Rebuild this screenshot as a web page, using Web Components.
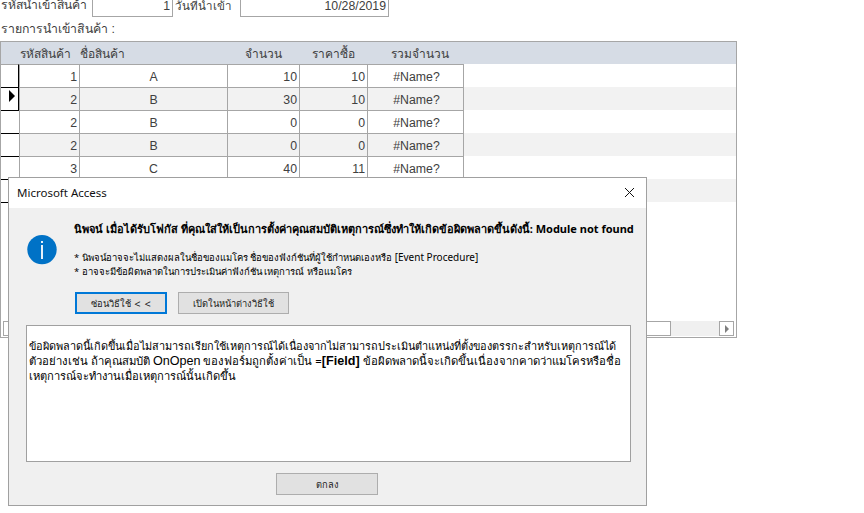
<!DOCTYPE html>
<html lang="th">
<head>
<meta charset="utf-8">
<title>Microsoft Access</title>
<style>
  html, body { margin: 0; height: 100%; background: #fff; overflow: hidden; }
  body { position: relative; font-family: "Liberation Sans", "Noto Sans", sans-serif; font-size: 12.3px; color: #404040; }
</style>
</head>
<body>
<order-form></order-form>
<access-dialog title="Microsoft Access">
  <b slot="headline">นิพจน์ เมื่อได้รับโฟกัส ที่คุณใส่ให้เป็นการตั้งค่าคุณสมบัติเหตุการณ์ซึ่งทำให้เกิดข้อผิดพลาดขึ้นดังนี้: Module not found</b>
  <div slot="notes">* นิพจน์อาจจะไม่แสดงผลในชื่อของแมโคร ชื่อของฟังก์ชันที่ผู้ใช้กำหนดเองหรือ <span style="font-size:10px">[Event Procedure]</span></div>
  <div slot="notes">* อาจจะมีข้อผิดพลาดในการประเมินค่าฟังก์ชัน เหตุการณ์ หรือแมโคร</div>
  <div slot="help" style="font-size:10.9px">ข้อผิดพลาดนี้เกิดขึ้นเมื่อไม่สามารถเรียกใช้เหตุการณ์ได้เนื่องจากไม่สามารถประเมินตำแหน่งที่ตั้งของตรรกะสำหรับเหตุการณ์ได้</div>
  <div slot="help" style="font-size:11.3px">ตัวอย่างเช่น ถ้าคุณสมบัติ <span style="font:12.6px 'Liberation Sans',sans-serif">OnOpen</span> ของฟอร์มถูกตั้งค่าเป็น =<b style="font:bold 12.6px 'Liberation Sans',sans-serif">[Field]</b> ข้อผิดพลาดนี้จะเกิดขึ้นเนื่องจากคาดว่าแมโครหรือชื่อ</div>
  <div slot="help" style="font-size:11.15px">เหตุการณ์จะทำงานเมื่อเหตุการณ์นั้นเกิดขึ้น</div>
</access-dialog>

<script>
  const ROWS = [
    ['1', 'A', '10', '10'],
    ['2', 'B', '30', '10'],
    ['2', 'B', '0', '0'],
    ['2', 'B', '0', '0'],
    ['3', 'C', '40', '11'],
    ['', '', '', ''],
    ['', '', '', '']
  ];

  // Form header: two inputs cut off by the top of the window
  class OrderForm extends HTMLElement {
    constructor() {
      super();
      this.attachShadow({ mode: 'open' });
      this.shadowRoot.innerHTML = `
        <style>
          :host { display: flex; flex-direction: column; height: 100%; }
          .fields { display: flex; height: 17px; line-height: 11px; }
          .lbl { padding-left: 1px; white-space: nowrap; box-sizing: border-box; }
          .lbl.a { width: 92px; font-size: 12.2px; }
          .lbl.b { width: 67px; padding-left: 2px; font-size: 11.6px; }
          .input { box-sizing: border-box; height: 17px; border: 1px solid #a6a6a6; border-top: 0;
                   text-align: right; padding-right: 2px; line-height: 13px; }
          .input.a { width: 81px; }
          .input.b { width: 149px; }
          .caption { height: 24px; line-height: 25px; padding-left: 1px; white-space: nowrap; font-size: 12.3px; }
        </style>
        <div class="fields">
          <span class="lbl a">รหัสนำเข้าสินค้า</span>
          <span class="input a">1</span>
          <span class="lbl b">วันที่นำเข้า</span>
          <span class="input b">10/28/2019</span>
        </div>
        <div class="caption">รายการนำเข้าสินค้า :</div>
        <order-grid></order-grid>`;
    }
  }

  // Datasheet subform with row selectors and the horizontal scrollbar
  class OrderGrid extends HTMLElement {
    constructor() {
      super();
      this.attachShadow({ mode: 'open' });
      const rows = ROWS.map((r, i) => `
        <div class="row ${i % 2 ? 'alt' : ''}">
          <div class="sel ${i === 1 ? 'cur' : ''}"></div>
          <div class="c n w1">${r[0]}</div>
          <div class="c m w2">${r[1]}</div>
          <div class="c n w3">${r[2]}</div>
          <div class="c n w4">${r[3]}</div>
          <div class="c m w5">${r[0] ? '#Name?' : ''}</div>
        </div>`).join('');
      this.shadowRoot.innerHTML = `
        <style>
          :host { display: flex; flex-direction: column; box-sizing: border-box; width: 737px; height: 297px;
                  border: 1px solid #a6a6a6; }
          .head { display: flex; height: 22px; background: #d6dce5; line-height: 25px; flex: none; font-size: 12px; }
          .head div { box-sizing: border-box; white-space: nowrap; }
          .w1 { width: 60px; } .w2 { width: 148px; } .w3 { width: 72px; } .w4 { width: 68px; } .w5 { width: 97px; }
          .head .spacer { width: 18px; }
          .head .w1 { padding-left: 1px; } .head .w2 { padding-left: 1px; }
          .head .w3 { padding-left: 18px; } .head .w4 { padding-left: 13px; } .head .w5 { padding-left: 24px; }
          .rows { flex: 1; }
          .row { display: flex; height: 23px; box-sizing: border-box; }
          .row.alt { background: #f2f2f2; }
          .sel { width: 18px; background: #fff; box-sizing: border-box; border-top: 1px solid #000; position: relative; flex: none; }
          .row:first-child .sel { border-top-color: #a6a6a6; }
          .row:first-child .sel, .row:nth-child(2) .sel { border-right: 1px solid #000; }
          .cur::after { content: ""; position: absolute; left: 8px; top: 2px; border-left: 6px solid #000;
                        border-top: 6px solid transparent; border-bottom: 6px solid transparent; }
          .c { box-sizing: border-box; border-left: 1px solid #a6a6a6; border-top: 1px solid #a6a6a6;
               line-height: 25px; white-space: nowrap; flex: none; }
          .c.w5 { border-right: 1px solid #a6a6a6; }
          .n { text-align: right; padding-right: 2px; }
          .m { text-align: center; }
          .m.w5 { padding-left: 2px; }
          .bar { display: flex; height: 15px; margin: 0 2px 1px 2px; flex: none; background: #f0f0f0; }
          .btn { box-sizing: border-box; width: 15px; height: 15px; border: 1px solid #a6a6a6; background: #fff; position: relative; flex: none; }
          .btn.l { width: 6px; }
          .btn.r::after { content: ""; position: absolute; left: 5px; top: 3px; border-left: 4px solid #7f7f7f;
                          border-top: 4px solid transparent; border-bottom: 4px solid transparent; }
          .thumb { box-sizing: border-box; width: 662px; border: 1px solid #a6a6a6; background: #fff; flex: none; }
          .track { flex: 1; }
        </style>
        <div class="head">
          <div class="spacer"></div>
          <div class="w1">รหัสสินค้า</div>
          <div class="w2">ชื่อสินค้า</div>
          <div class="w3">จำนวน</div>
          <div class="w4">ราคาซื้อ</div>
          <div class="w5">รวมจำนวน</div>
        </div>
        <div class="rows">${rows}</div>
        <div class="bar">
          <div class="btn l"></div>
          <div class="thumb"></div>
          <div class="track"></div>
          <div class="btn r"></div>
        </div>`;
    }
  }

  class WinButton extends HTMLElement {
    constructor() {
      super();
      this.attachShadow({ mode: 'open' });
      this.shadowRoot.innerHTML = `
        <style>
          :host { display: flex; align-items: center; justify-content: center; box-sizing: border-box;
                  height: 22px; background: #e1e1e1; border: 1px solid #adadad;
                  font-family: "Noto Sans", sans-serif; font-size: 9.3px; color: #222; white-space: nowrap; }
          :host([default]) { border: 2px solid #0078d7; }
        </style>
        <slot></slot>`;
    }
  }

  // Error window floating over the form
  class AccessDialog extends HTMLElement {
    constructor() {
      super();
      this.attachShadow({ mode: 'open' });
      this.shadowRoot.innerHTML = `
        <style>
          :host { position: absolute; left: 8px; top: 177px; width: 639px; height: 329px; box-sizing: border-box;
                  display: flex; flex-direction: column; background: #f0f0f0; border: 1px solid #a0a0a0; color: #000;
                  font-family: "Noto Sans", sans-serif; font-size: 11px; }
          .title { height: 30px; box-sizing: border-box; padding: 0 11px 2px 8px; background: #fff; display: flex;
                   align-items: center; justify-content: space-between; font-size: 11.5px; flex: none; color: #111; }
          .top { display: flex; height: 84px; flex: none; }
          .icon { width: 65px; flex: none; padding: 26px 0 0 18px; box-sizing: border-box; }
          .msg { padding-top: 13px; white-space: nowrap; }
          .headline { line-height: 15px; height: 29px; }
          .notes { line-height: 14px; font-size: 9.5px; }
          .buttons { display: flex; gap: 11px; margin: 0 0 0 66px; flex: none; height: 22px; }
          .buttons win-button:first-child { width: 92px; }
          .buttons win-button:last-child { width: 111px; }
          .arrows { font-size: 11px; margin-left: 3px; word-spacing: 1px; }
          .help { box-sizing: border-box; margin: 11px 15px 0 17px; height: 137px; background: #fff; border: 1px solid #a0a0a0;
                  padding: 12px 2px; line-height: 15px; font-size: 11px; white-space: nowrap; flex: none; }
          .ok { display: flex; justify-content: center; margin: 11px 1px 0 0; }
          .ok win-button { width: 102px; }
        </style>
        <div class="title">
          <span>${this.getAttribute('title')}</span>
          <svg width="11" height="11" viewBox="0 0 11 11"><path d="M1 1l9 9M10 1l-9 9" fill="none" stroke="#111" stroke-width="1"/></svg>
        </div>
        <div class="top">
          <div class="icon">
            <svg width="30" height="31" viewBox="0 0 30 31">
              <circle cx="15" cy="15.6" r="14.7" fill="#0072c6"/>
              <rect x="14.1" y="11" width="1.8" height="14" fill="#fff"/>
              <rect x="14.1" y="7" width="1.8" height="2" fill="#fff"/>
            </svg>
          </div>
          <div class="msg">
            <div class="headline"><slot name="headline"></slot></div>
            <div class="notes"><slot name="notes"></slot></div>
          </div>
        </div>
        <div class="buttons">
          <win-button default>ซ่อนวิธีใช้<span class="arrows">&lt; &lt;</span></win-button>
          <win-button>เปิดในหน้าต่างวิธีใช้</win-button>
        </div>
        <div class="help"><slot name="help"></slot></div>
        <div class="ok"><win-button>ตกลง</win-button></div>`;
    }
  }

  customElements.define('order-grid', OrderGrid);
  customElements.define('order-form', OrderForm);
  customElements.define('win-button', WinButton);
  customElements.define('access-dialog', AccessDialog);
</script>
</body>
</html>
